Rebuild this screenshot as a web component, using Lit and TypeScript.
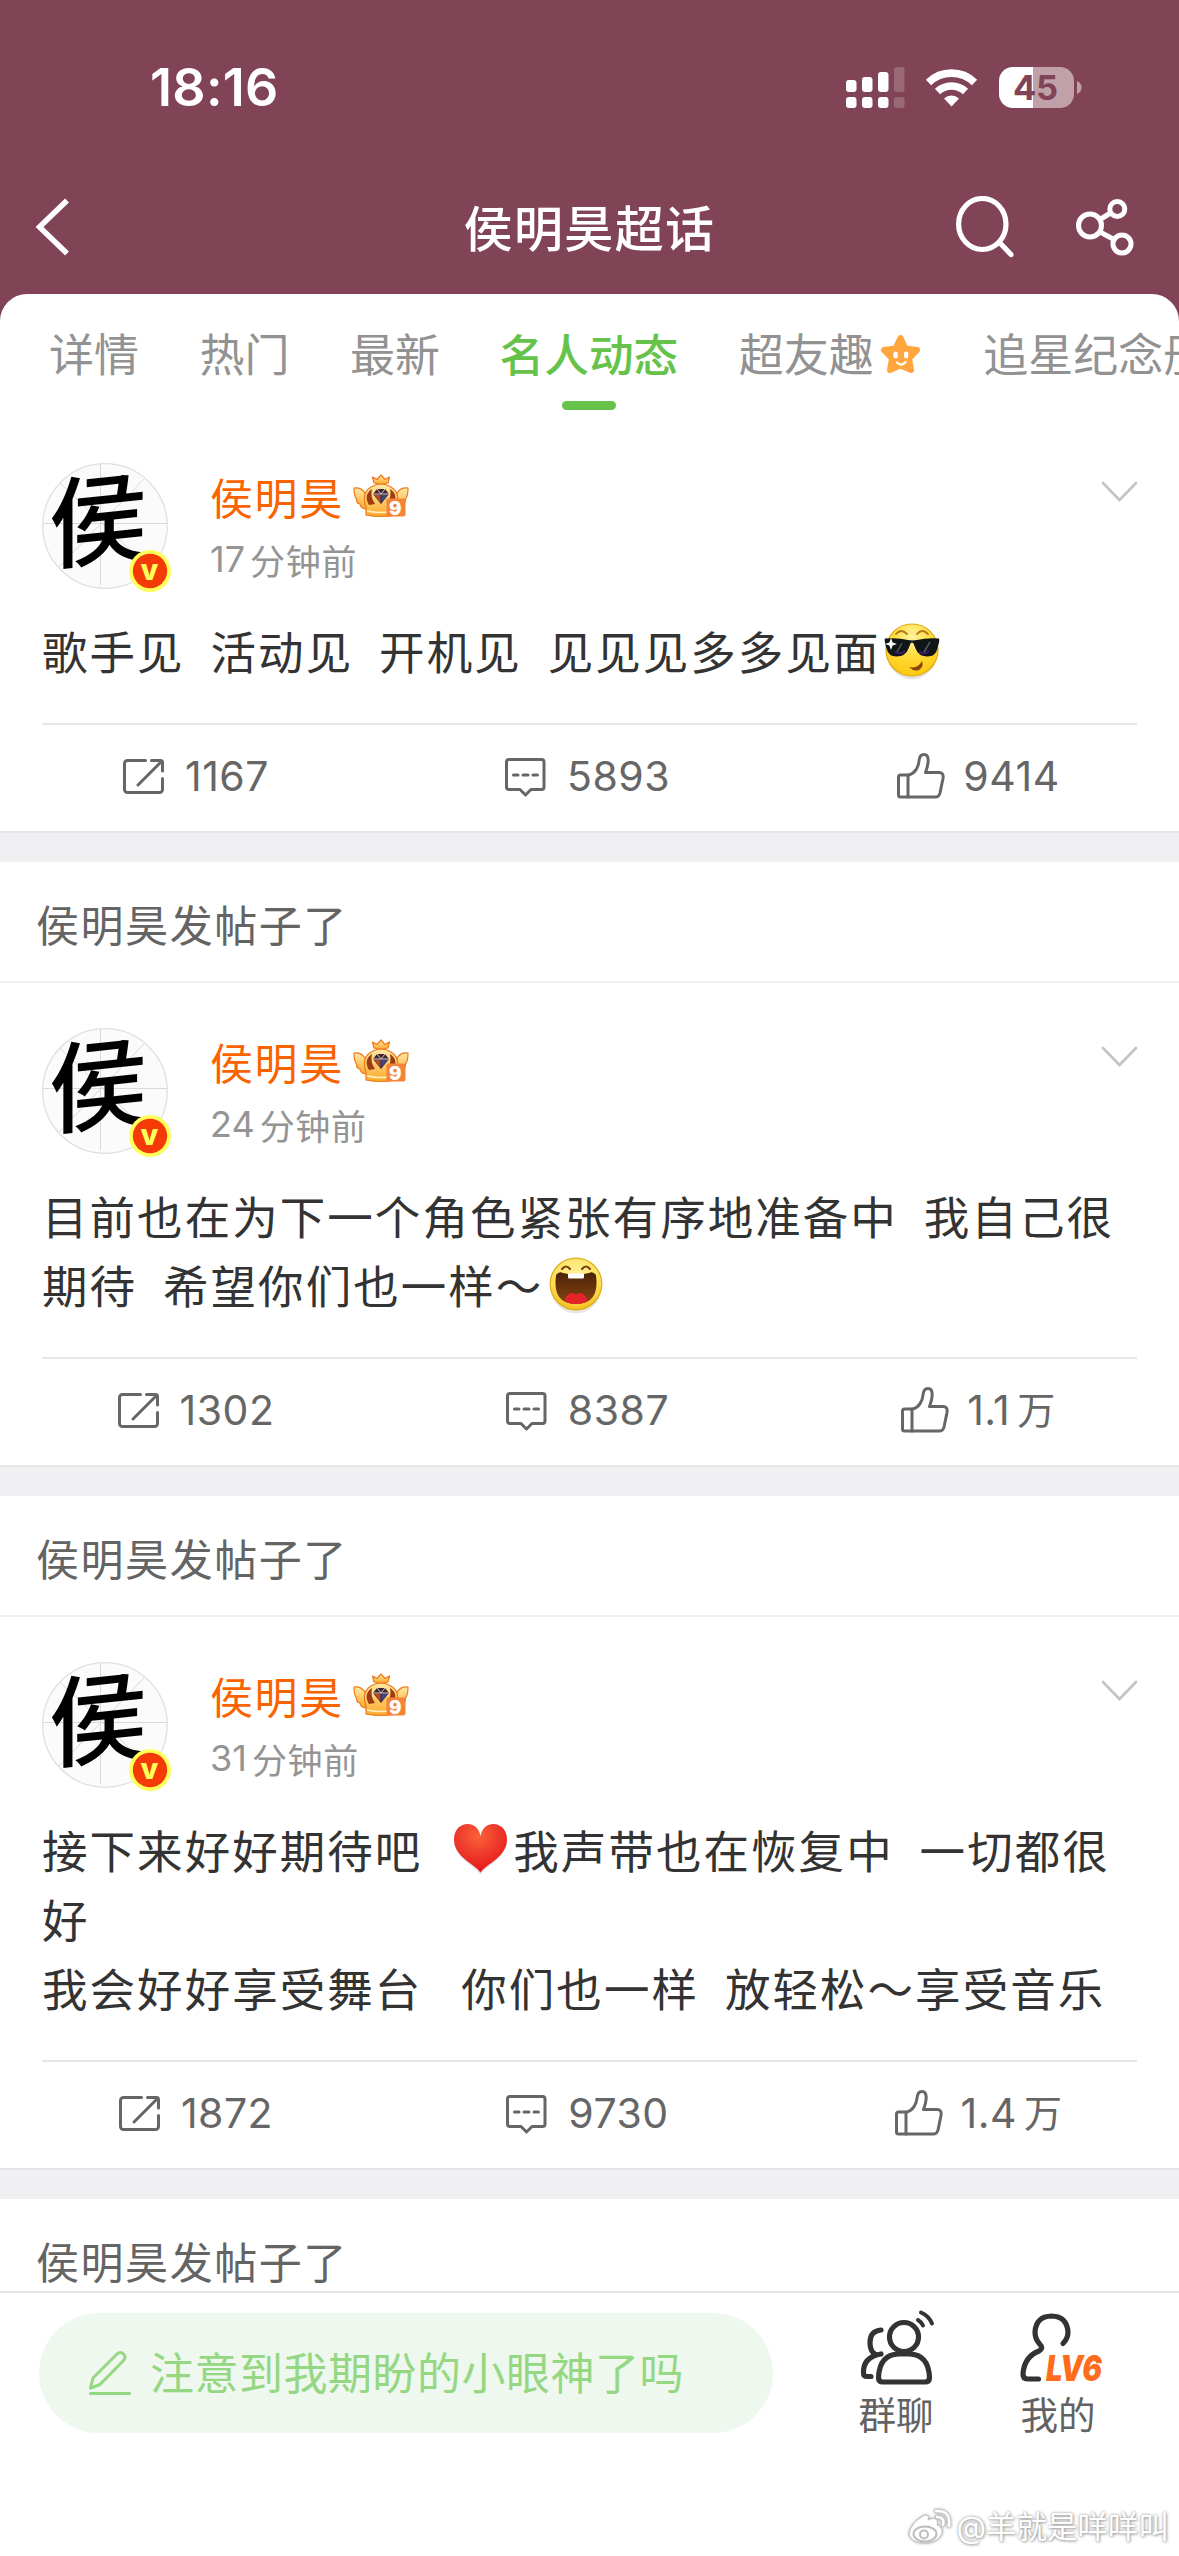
import { LitElement, html, css } from "lit";
import { customElement, property } from "lit/decorators.js";

const FONT = css`"Inter", "Noto Sans CJK SC", sans-serif`;

interface Post {
  heading?: string;
  minutes: string;
  body: unknown;
  reposts: string;
  comments: string;
  likes: string;
  likesUnit?: string;
}

const coolFace = html`<svg class="emoji" width="65" height="60" viewBox="0 0 65 60" aria-hidden="true">
  <defs>
    <radialGradient id="cool" cx="50%" cy="25%" r="75%">
      <stop offset="0" stop-color="#fff3a0" /><stop offset=".5" stop-color="#ffdc3c" /><stop offset="1" stop-color="#fdc70f" />
    </radialGradient>
  </defs>
  <ellipse cx="32" cy="32" rx="25" ry="26.500" fill="#000" opacity=".1" />
  <circle cx="32" cy="29" r="26" fill="url(#cool)" stroke="#e0a910" stroke-width="1.200" />
  <path d="M16 13q5-6 11 0M37 13q5-6 11 0" fill="none" stroke="#b87415" stroke-width="1.800" stroke-linecap="round" />
  <path d="M5 17.500q13-1 23 1.500q4 .8 9 0q10-2.500 22-1.500q.6 1 0 4q-1 3-1.500 6q-2 8-10 8q-9 0-12-8l-2-5q-1.500-2-3 0l-2 5q-3 8-12 8q-8 0-10-8q-1-3-1.500-6q-.8-3 0-4z" fill="#101517" />
  <path d="M15 31q6 3 10-1M39 31q6 3 10-1" stroke="#3a1a63" stroke-width="2.400" fill="none" />
  <path d="M22 22l-5 9M50 21l-6 10" stroke="#4c5b60" stroke-width="1.500" />
  <path d="M11 17l1.600 4.400 4.400 1.600-4.400 1.600-1.600 4.400-1.600-4.400L5 23l4.400-1.600z" fill="#fff" />
  <path d="M29 46q9 2 13-6q2 6-3 9q-5 2-10-3z" fill="#8d4208" />
</svg>`;

const laughFace = html`<svg class="emoji" width="65" height="60" viewBox="0 0 65 60" aria-hidden="true">
  <defs>
    <radialGradient id="laugh" cx="50%" cy="30%" r="70%">
      <stop offset="0" stop-color="#fff19a" /><stop offset=".65" stop-color="#ffe15a" /><stop offset="1" stop-color="#f3bd1c" />
    </radialGradient>
    <linearGradient id="mouth" x1="0" y1="0" x2="0" y2="1">
      <stop offset="0" stop-color="#4b2306" /><stop offset="1" stop-color="#874511" />
    </linearGradient>
    <clipPath id="mouthclip"><path d="M13 21q20 5 40 0q2 28-20 28t-20-28z" /></clipPath>
  </defs>
  <ellipse cx="33" cy="32" rx="25" ry="26.500" fill="#000" opacity=".1" />
  <circle cx="33" cy="29" r="25.800" fill="url(#laugh)" stroke="#dfac1a" stroke-width="1.200" />
  <path d="M19 14q4-5 8 0M39 14q4-5 8 0" fill="none" stroke="#7d4410" stroke-width="2.200" stroke-linecap="round" />
  <path d="M13 20q3-4 7-2q13 3 26 0q4-2 7 2q4 29-20 29t-20-29z" fill="url(#mouth)" />
  <path d="M25 18.500h16v3.500q0 1.500-1.500 1.500h-13q-1.500 0-1.500-1.500z" fill="#fff" />
  <path clip-path="url(#mouthclip)" d="M21 50q1-12 8-12q3 0 4 2q1-2 4-2q7 0 8 12z" fill="#e5232b" />
</svg>`;

const heart = html`<svg class="emoji" width="65" height="60" viewBox="0 0 65 60" aria-hidden="true">
  <defs>
    <radialGradient id="heart" cx="45%" cy="25%" r="70%">
      <stop offset="0" stop-color="#fb6238" /><stop offset=".55" stop-color="#ee3a2b" /><stop offset="1" stop-color="#e81a1a" />
    </radialGradient>
  </defs>
  <path d="M32.500 54.500C27 46 6 38 6 20.500C6 10 13 5 19.500 5S31 9 32.500 17C34 9 39 5 45.500 5S59 10 59 20.500C59 38 38 46 32.500 54.500z" fill="#000" opacity=".12" />
  <path d="M32.500 52.500C27 44 6 37 6 19.500C6 9 13 4 19.500 4S31 8 32.500 16C34 8 39 4 45.500 4S59 9 59 19.500C59 37 38 44 32.500 52.500z" fill="url(#heart)" />
</svg>`;

const repostIcon = html`<svg width="41" height="46" viewBox="0 0 41 46" fill="none" stroke="#666" stroke-width="3" stroke-linecap="round" stroke-linejoin="round" aria-hidden="true">
  <path d="M22.500 7.500H4.500a3 3 0 0 0-3 3v26a3 3 0 0 0 3 3h32a3 3 0 0 0 3-3V25.500" />
  <path d="M28.500 7.500h9a2 2 0 0 1 2 2V18M38.500 8.500L15 32" />
</svg>`;

const commentIcon = html`<svg width="41" height="46" viewBox="0 0 41 46" fill="none" stroke="#666" stroke-width="3" stroke-linecap="round" stroke-linejoin="round" aria-hidden="true">
  <path d="M4 6.500h32.500a2.500 2.500 0 0 1 2.500 2.500v25a2.500 2.500 0 0 1-2.500 2.500H26L20.500 42 15 36.500H4A2.500 2.500 0 0 1 1.500 34V9A2.500 2.500 0 0 1 4 6.500z" />
  <path d="M8.500 22h4.500M18 22h5M28 22h4.500" />
</svg>`;

const likeIcon = html`<svg width="48" height="46" viewBox="0 0 48 46" fill="none" stroke="#666" stroke-width="3" stroke-linecap="round" stroke-linejoin="round" aria-hidden="true">
  <path d="M3.500 22H12C18 20.500 21.500 14 22 8q.5-6.500 5-6.500c5 0 5.500 7 1.500 18H42q5 0 4 6l-3 14.500q-1 4-4 4H3.500q-2 0-2-2V24q0-2 2-2z" />
  <path d="M11 22v22" />
</svg>`;

const crown = html`<svg width="56" height="44" viewBox="0 0 56 44" aria-hidden="true">
  <defs>
    <linearGradient id="gold" x1="0" y1="0" x2="0" y2="1">
      <stop offset="0" stop-color="#ffe9a6" /><stop offset="1" stop-color="#fba92c" />
    </linearGradient>
  </defs>
  <g fill="url(#gold)" stroke="#ee7a1c" stroke-width="1.200" stroke-linejoin="round">
    <path d="M1 14q7-1 11 5l3 16q-8 0-8-5q-4-1-3.500-5Q1 22 1 14z" />
    <path d="M55 14q-7-1-11 5l-3 16q8 0 8-5q4-1 3.500-5Q55 22 55 14z" />
    <path d="M13 41v-8q-5-14 5-20q10-6 20 0q10 6 5 20v8q-15 3-30 0z" />
    <path d="M21 9l-1.500-6 4.500 2.500L28 1l4 4.500L36.500 3 35 9q-7 2-14 0z" />
  </g>
  <path d="M16 31q-6-10 3-16q-2 8 3 15zM40 31q6-10-3-16q2 8-3 15z" fill="#9b3c12" />
  <path d="M14 37q14 3 28 0" stroke="#fff0bd" stroke-width="1.600" fill="none" />
  <path d="M20 20l4-5h8l4 5-8 10z" fill="#3c2433" />
  <path d="M20 20h16M24 15l4 5 4-5" stroke="#d7c8c0" stroke-width="1" fill="none" />
  <path d="M21.500 21h6v8z" fill="#b34a2a" />
  <path d="M28.500 21h6l-6 8z" fill="#39539a" opacity=".8" />
  <rect x="33.500" y="24.500" width="19" height="18" rx="2" fill="#f5843a" />
  <text x="43" y="40.500" text-anchor="middle" font-family="Inter, sans-serif" font-weight="900" font-size="18.500" fill="#fff">9</text>
</svg>`;

const posts: Post[] = [
  {
    minutes: "17",
    body: html`歌手见  活动见  开机见  见见见多多见面${coolFace}`,
    reposts: "1167",
    comments: "5893",
    likes: "9414",
  },
  {
    heading: "侯明昊发帖子了",
    minutes: "24",
    body: html`目前也在为下一个角色紧张有序地准备中  我自己很期待  希望你们也一样～${laughFace}`,
    reposts: "1302",
    comments: "8387",
    likes: "1.1",
    likesUnit: "万",
  },
  {
    heading: "侯明昊发帖子了",
    minutes: "31",
    body: html`接下来好好期待吧  ${heart}我声带也在恢复中  一切都很好<br />我会好好享受舞台   你们也一样  放轻松～享受音乐`,
    reposts: "1872",
    comments: "9730",
    likes: "1.4",
    likesUnit: "万",
  },
];

@customElement("feed-heading")
class FeedHeading extends LitElement {
  static styles = css`
    :host {
      display: block;
      height: 121px;
      box-sizing: border-box;
      border-bottom: 2px solid #f1f1f3;
      padding: 4px 36px 0;
      font: 43px/120px ${FONT};
      letter-spacing: 1.550px;
      color: #646464;
      background: #fff;
    }
  `;
  render() {
    return html`<slot></slot>`;
  }
}

@customElement("post-card")
class PostCard extends LitElement {
  @property({ attribute: false }) post!: Post;

  static styles = css`
    :host {
      display: block;
      padding-top: 45px;
      background: #fff;
      font-family: ${FONT};
    }
    .head {
      display: flex;
      height: 126px;
      padding: 0 41px 0 42px;
    }
    .avatar {
      position: relative;
      width: 126px;
      height: 126px;
      flex: none;
    }
    .avatar .face {
      display: block;
    }
    .badge {
      position: absolute;
      left: 87px;
      top: 87px;
    }
    .who {
      margin-left: 42px;
      flex: 1;
    }
    .name {
      display: flex;
      align-items: center;
      height: 50px;
      margin-top: 8px;
      font-size: 43px;
      letter-spacing: 1.600px;
      color: #fa6400;
    }
    .name svg {
      margin: 0 0 0 9px;
    }
    .time {
      display: flex;
      align-items: center;
      gap: 5px;
      height: 44px;
      margin-top: 16px;
      font-size: 35px;
      letter-spacing: 0.700px;
      color: #949494;
    }
    .num {
      font-size: 36px;
      letter-spacing: 0;
    }
    .more {
      margin-top: 17px;
    }
    .body {
      margin: 30px 42px 35px;
      font-size: 45.500px;
      line-height: 69px;
      letter-spacing: 2.050px;
      word-spacing: -1.900px;
      color: #333;
      white-space: pre-wrap;
    }
    .emoji {
      display: inline-block;
      vertical-align: -11px;
      margin-top: -10px;
    }
    .actions {
      display: grid;
      grid-template-columns: repeat(3, 1fr);
      height: 108px;
      box-sizing: border-box;
      margin: 0 42px;
      padding-bottom: 5px;
      border-top: 2px solid #e6e6e8;
    }
    .action {
      display: flex;
      align-items: center;
      justify-content: center;
      gap: 21px;
      font-size: 41px;
      letter-spacing: 0.500px;
      line-height: 50px;
      color: #666;
    }
    .action:first-child {
      padding-right: 57px;
    }
    .action:nth-child(2) {
      padding-right: 4px;
    }
    .action:last-child {
      gap: 18px;
      padding-left: 48px;
    }
    .likes {
      display: flex;
      align-items: center;
      gap: 7px;
    }
    .unit {
      font-size: 38px;
      line-height: 50px;
    }
  `;

  render() {
    const p = this.post;
    return html`
      <div class="head">
        <div class="avatar">
          <svg class="face" width="126" height="126" viewBox="0 0 126 126">
            <circle cx="63" cy="63" r="62.300" fill="#fbfbfb" stroke="#e0e0e0" stroke-width="1.300" />
            <path d="M58.500 1v121M1 60.500h124M18 20l89 85M102 16L17 104" stroke="#d9d9d9" stroke-width="1" />
            <text x="56" y="94" text-anchor="middle" transform="translate(0 6) skewY(-6)" font-family="Noto Sans CJK SC, sans-serif" font-weight="500" font-size="99" fill="#000">侯</text>
          </svg>
          <svg class="badge" width="42" height="42" viewBox="0 0 42 42">
            <circle cx="21" cy="21" r="21" fill="#ffff5c" />
            <circle cx="21" cy="21" r="17.200" fill="#f43a06" />
            <text x="20.500" y="30" text-anchor="middle" font-family="Inter, sans-serif" font-weight="800" font-size="29" fill="#ffff5c">v</text>
          </svg>
        </div>
        <div class="who">
          <div class="name">侯明昊${crown}</div>
          <div class="time"><span class="num">${p.minutes}</span><span>分钟前</span></div>
        </div>
        <svg class="more" width="38" height="24" viewBox="0 0 38 24" fill="none" stroke="#c4c4c4" stroke-width="2.700" stroke-linecap="round">
          <path d="M3 3l16.500 17L36 3" />
        </svg>
      </div>
      <div class="body">${p.body}</div>
      <div class="actions">
        <div class="action">${repostIcon}<span>${p.reposts}</span></div>
        <div class="action">${commentIcon}<span>${p.comments}</span></div>
        <div class="action">
          ${likeIcon}
          <div class="likes"><span>${p.likes}</span>${p.likesUnit ? html`<span class="unit">${p.likesUnit}</span>` : ""}</div>
        </div>
      </div>
    `;
  }
}

@customElement("app-root")
class AppRoot extends LitElement {
  static styles = css`
    :host {
      display: flex;
      flex-direction: column;
      position: relative;
      width: 1179px;
      height: 2556px;
      overflow: hidden;
      background: #804456;
      font-family: ${FONT};
    }
    .status {
      display: flex;
      align-items: center;
      justify-content: space-between;
      height: 176px;
      box-sizing: border-box;
      padding: 0 97px 0 150px;
    }
    .clock {
      font-size: 52px;
      font-weight: 600;
      line-height: 60px;
      color: #fff;
      letter-spacing: 0.300px;
    }
    .nav {
      display: grid;
      grid-template-columns: 300px 1fr 300px;
      align-items: center;
      height: 118px;
      box-sizing: border-box;
      padding-bottom: 16px;
    }
    .back {
      margin-left: 34px;
    }
    .title {
      padding-top: 5px;
      text-align: center;
      font-size: 49px;
      font-weight: 500;
      letter-spacing: 1.400px;
      line-height: 70px;
      color: #fff;
    }
    .tools {
      display: flex;
      gap: 58px;
      padding-left: 75px;
    }
    .sheet {
      flex: 1;
      min-height: 0;
      overflow: hidden;
      border-radius: 27px 27px 0 0;
      background: #fff;
    }
    .tabs {
      display: flex;
      gap: 60.500px;
      height: 124px;
      padding-left: 49px;
      font-size: 45px;
      line-height: 126px;
      color: #929292;
      white-space: nowrap;
    }
    .tab {
      position: relative;
      display: flex;
      align-items: center;
      flex: none;
    }
    .tab svg {
      margin: 0 0 2px 4px;
    }
    .current {
      font-size: 44.700px;
      margin-left: -1px;
      font-weight: 500;
      color: #65c34b;
    }
    .current::after {
      content: "";
      position: absolute;
      left: 62px;
      top: 107px;
      width: 54px;
      height: 9px;
      border-radius: 5px;
      background: #65c34b;
    }
    .band {
      height: 31px;
      box-sizing: border-box;
      background: #f0f0f3;
      border-top: 2px solid #e5e5e7;
    }
    .dock {
      display: flex;
      height: 265px;
      box-sizing: border-box;
      padding: 20px 0 0 39px;
      border-top: 2px solid #e4e4e4;
      background: #fff;
    }
    .compose {
      display: flex;
      align-items: center;
      width: 734px;
      height: 120px;
      box-sizing: border-box;
      padding-left: 49px;
      gap: 18px;
      border-radius: 60px;
      background: #eef8ee;
      color: #95d783;
      font-size: 44px;
      letter-spacing: 0.500px;
    }
    .compose span {
      margin-top: -4px;
    }
    .dockitem {
      display: flex;
      flex-direction: column;
      align-items: center;
      width: 162px;
      margin-top: -9px;
      font-size: 37.500px;
      line-height: 47px;
      color: #626262;
    }
    .dockitem:nth-child(2) {
      margin-left: 42px;
    }
    .watermark {
      position: absolute;
      right: 10px;
      bottom: 8px;
      display: flex;
      align-items: center;
      gap: 5px;
      font-size: 30.500px;
      line-height: 42px;
      color: #fff;
      text-shadow: 0 0 3px #999, 1px 1px 3px #aaa;
    }
    .watermark svg {
      filter: drop-shadow(0 0 1.500px #999);
      overflow: visible;
    }
  `;

  private renderStatus() {
    return html`<div class="status">
      <div class="clock">18:16</div>
      <svg width="236" height="44" viewBox="846 66 236 44" fill="#fff">
        <rect x="846" y="80" width="10.500" height="12" rx="3" />
        <rect x="862" y="77" width="10.500" height="15" rx="3" />
        <rect x="878" y="72" width="10.500" height="20" rx="3" />
        <rect x="846" y="97" width="10.500" height="11" rx="3" />
        <rect x="862" y="97" width="10.500" height="11" rx="3" />
        <rect x="878" y="97" width="10.500" height="11" rx="3" />
        <g opacity=".2">
          <rect x="894" y="67" width="10.500" height="25" rx="3" />
          <rect x="894" y="97" width="10.500" height="11" rx="3" />
        </g>
        <g fill="none" stroke="#fff" stroke-width="7.600">
          <path d="M928.500 82.500a33 33 0 0 1 46 0" />
          <path d="M937.500 91.500a20.500 20.500 0 0 1 28 0" />
        </g>
        <path d="M944 98.500a11 11 0 0 1 15 0l-7.500 8z" />
        <path d="M1013 67h20v41h-20a14 14 0 0 1-14-14V81a14 14 0 0 1 14-14z" />
        <path d="M1033 67h27a14 14 0 0 1 14 14v13a14 14 0 0 1-14 14h-27z" fill="#c0a1aa" />
        <path d="M1077 81q4.500 2 4.500 6.500t-4.500 6.500z" fill="#c0a1aa" />
        <text x="1035.500" y="100" text-anchor="middle" textLength="45" font-family="Inter, sans-serif" font-weight="700" font-size="34.500" fill="#804456">45</text>
      </svg>
    </div>`;
  }

  private renderNav() {
    return html`<div class="nav">
      <svg class="back" width="38" height="62" viewBox="34 196 38 62" fill="none" stroke="#fff" stroke-width="5.500">
        <path d="M67 200.500L39.500 227L67 253.500" />
      </svg>
      <div class="title">侯明昊超话</div>
      <div class="tools">
        <svg width="62" height="62" viewBox="954 196 62 62" fill="none" stroke="#fff" stroke-width="5.200" stroke-linecap="round">
          <ellipse cx="982.300" cy="224" rx="23.700" ry="25.500" />
          <path d="M1000 243l11 11.500" />
        </svg>
        <svg width="62" height="62" viewBox="1074 196 62 62" fill="none" stroke="#fff" stroke-width="5">
          <circle cx="1090" cy="225.500" r="11.500" />
          <circle cx="1117.300" cy="209" r="7.500" />
          <circle cx="1122" cy="244" r="9" />
          <path d="M1100 219.500l10.500-6.500M1100 232l14 7.500" />
        </svg>
      </div>
    </div>`;
  }

  private renderTabs() {
    const star = html`<svg width="45" height="44" viewBox="0 0 45 44">
      <path d="M22.500 5l5 10.500 11.500 1.500-8 8.500 2 11.500-10.500-4.500-10.500 4.500 2-11.500L6 17l11.500-1.500z" fill="#ffa63e" stroke="#ffa63e" stroke-width="6" stroke-linejoin="round" />
      <rect x="15.500" y="18.500" width="4.200" height="7" rx="2.100" fill="#fff" />
      <rect x="26" y="18.500" width="4.200" height="7" rx="2.100" fill="#fff" />
      <path d="M19 29.500q4.500 4.500 8.500-.5" fill="none" stroke="#fff" stroke-width="2.200" stroke-linecap="round" />
    </svg>`;
    return html`<div class="tabs">
      <div class="tab">详情</div>
      <div class="tab">热门</div>
      <div class="tab">最新</div>
      <div class="tab current">名人动态</div>
      <div class="tab">超友趣${star}</div>
      <div class="tab">追星纪念册</div>
    </div>`;
  }

  private renderDock() {
    return html`<div class="dock">
      <div class="compose">
        <svg width="44" height="46" viewBox="0 0 44 46" fill="none" stroke="#95d783" stroke-width="3" stroke-linejoin="round" stroke-linecap="round">
          <path d="M2.500 38l2.500-10L29 4q3.500-3 6.500 0t0 6.500L12 34.500z" />
          <path d="M2.500 43.500h39" />
        </svg>
        <span>注意到我期盼的小眼神了吗</span>
      </div>
      <div class="dockitem">
        <svg width="80" height="88" viewBox="856 2304 80 88" fill="none" stroke="#333" stroke-width="5.200" stroke-linecap="round" stroke-linejoin="round">
          <circle cx="904" cy="2337" r="14.500" />
          <path d="M883 2382q-4.500 0-4.500-4.500q1-23 20-23.500h11q19 .5 20 23.500q0 4.500-4.500 4.500z" />
          <path d="M881 2330q-11 1-11 12.500q0 9 5 11.500M881 2354q-18 3-17.500 19q0 3.500 3.500 3.500h4" />
          <path d="M918 2320q3.500 2 5 5.500" stroke-width="4" />
          <path d="M921 2312.500q8 3.500 11 11" stroke-width="4" />
        </svg>
        群聊
      </div>
      <div class="dockitem">
        <svg width="92" height="88" viewBox="1012 2304 92 88" fill="none" stroke="#333" stroke-width="5.200" stroke-linecap="round" stroke-linejoin="round">
          <path d="M1063 2343.500q5-5 5-11.500q-1-15.500-16.500-16q-15.500.5-16.500 16q0 7 5 12.500q4 3.500-1 6.500q-15 6-16 23q0 5 4.500 5h11" />
          <text x="1046" y="2381" textLength="56" lengthAdjust="spacingAndGlyphs" font-family="Inter, sans-serif" font-weight="900" font-style="italic" font-size="36" fill="#ff6d1c" stroke="none">LV6</text>
        </svg>
        我的
      </div>
    </div>`;
  }

  private renderWatermark() {
    return html`<div class="watermark">
      <svg width="44" height="36" viewBox="0 0 44 36">
        <path d="M1 25Q3 14 15 7q7-3 5 4q6-3 9 0q1 3 0 5q6 2 5 8q-3 9-16 10Q3 34 1 25z" fill="#fff" stroke="#c4c4c4" />
        <ellipse cx="17" cy="25" rx="11.500" ry="7.500" fill="none" stroke="#bdbdbd" stroke-width="2" />
        <circle cx="16" cy="25.500" r="4" fill="none" stroke="#bdbdbd" stroke-width="2" />
        <path d="M29 8q8 0 6 8M28 2q15-1 13 15" fill="none" stroke="#c4c4c4" stroke-width="4" stroke-linecap="round" />
        <path d="M29 8q8 0 6 8M28 2q15-1 13 15" fill="none" stroke="#fff" stroke-width="2.500" stroke-linecap="round" />
      </svg>
      <span>@羊就是咩咩叫</span>
    </div>`;
  }

  render() {
    return html`
      ${this.renderStatus()} ${this.renderNav()}
      <div class="sheet">
        ${this.renderTabs()}
        ${posts.map(
          (p) => html`
            ${p.heading ? html`<feed-heading>${p.heading}</feed-heading>` : ""}
            <post-card .post=${p}></post-card>
            <div class="band"></div>
          `
        )}
        <feed-heading>侯明昊发帖子了</feed-heading>
      </div>
      ${this.renderDock()} ${this.renderWatermark()}
    `;
  }
}
